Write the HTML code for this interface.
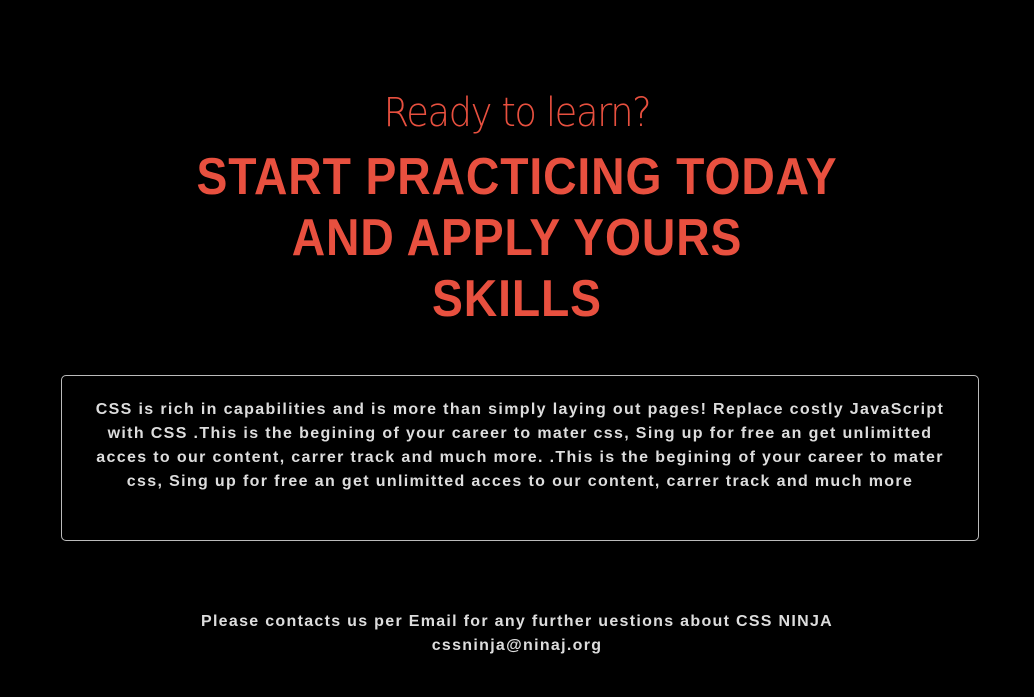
<!DOCTYPE html>
<html><head><style>
body{margin:0;background:#000;width:1034px;height:697px;overflow:hidden;font-family:"Liberation Sans",Arial,sans-serif}
.sub{position:absolute;top:88px;left:0;width:1034px;text-align:center;color:#e8503f;font-size:40px;line-height:50px;font-family:"DejaVu Sans","Liberation Sans",sans-serif;font-weight:300;letter-spacing:-1.5px;transform:scaleX(.92)}
.h{position:absolute;top:147px;left:0;width:1034px;text-align:center;color:#e8503f;font-family:"Liberation Sans",sans-serif;font-weight:bold;font-size:52px;line-height:61px;letter-spacing:1px;transform:scaleX(.89)}
.box{position:absolute;left:61px;top:375px;width:916px;height:164px;border:1px solid #bbb;border-radius:5px}
.box p{margin:22px 28px 0;text-align:center;color:#ddd;font-weight:bold;font-size:16px;line-height:24px;letter-spacing:1.35px}
.f{position:absolute;top:610px;left:0;width:1034px;text-align:center;color:#ddd;font-weight:bold;font-size:16px;line-height:24px;letter-spacing:1.3px}
</style></head><body>
<div class="sub">Ready to learn?</div>
<div class="h">START PRACTICING TODAY<br>AND APPLY YOURS<br>SKILLS</div>
<div class="box"><p>CSS is rich in capabilities and is more than simply laying out pages! Replace costly JavaScript with CSS .This is the begining of your career to mater css, Sing up for free an get unlimitted acces to our content, carrer track and much more. .This is the begining of your career to mater css, Sing up for free an get unlimitted acces to our content, carrer track and much more</p></div>
<div class="f">Please contacts us per Email for any further uestions about CSS NINJA<br>cssninja@ninaj.org</div>
</body></html>
